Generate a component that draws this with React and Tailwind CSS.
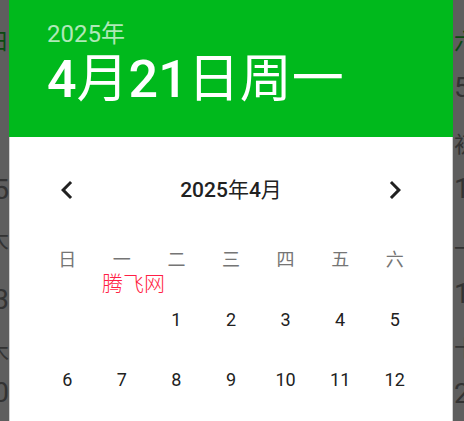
const FONT = "font-['Roboto','Noto_Sans_CJK_SC',sans-serif]";

function ChevronLeft() {
  return (
    <svg width="36" height="36" viewBox="0 0 24 24" fill="#212121">
      <path d="M15.41 7.41L14 6l-6 6 6 6 1.41-1.41L10.83 12z" />
    </svg>
  );
}

function ChevronRight() {
  return (
    <svg width="36" height="36" viewBox="0 0 24 24" fill="#212121">
      <path d="M10 6L8.59 7.41 13.17 12l-4.58 4.59L10 18l6-6z" />
    </svg>
  );
}

function LeftStrip() {
  return (
    <div className="w-[9px] shrink-0 overflow-hidden flex flex-col items-end text-[#333333]">
      <div className="h-[29px] shrink-0" />
      <div className="h-[26px] shrink-0 text-[22px] leading-[26px] text-[#0b4a12] whitespace-nowrap">日</div>
      <div className="h-[121px] shrink-0" />
      <div className="h-[28px] shrink-0 text-[28px] leading-[28px] whitespace-nowrap">5</div>
      <div className="h-[24px] shrink-0" />
      <div className="h-[24px] shrink-0 text-[22px] leading-[24px] whitespace-nowrap">大</div>
      <div className="h-[34px] shrink-0" />
      <div className="h-[28px] shrink-0 text-[28px] leading-[28px] whitespace-nowrap">3</div>
      <div className="h-[27px] shrink-0" />
      <div className="h-[24px] shrink-0 text-[22px] leading-[24px] whitespace-nowrap">木</div>
      <div className="h-[14px] shrink-0" />
      <div className="h-[28px] shrink-0 text-[28px] leading-[28px] whitespace-nowrap">0</div>
    </div>
  );
}

function RightStrip() {
  return (
    <div className="w-[11px] shrink-0 overflow-hidden flex flex-col items-start pl-[1px] text-[#333333]">
      <div className="h-[30px] shrink-0" />
      <div className="h-[24px] shrink-0 text-[22px] leading-[24px] text-[#0b4a12] whitespace-nowrap">六</div>
      <div className="h-[20px] shrink-0" />
      <div className="h-[28px] shrink-0 text-[28px] leading-[28px] whitespace-nowrap">5</div>
      <div className="h-[31px] shrink-0" />
      <div className="h-[24px] shrink-0 text-[22px] leading-[24px] whitespace-nowrap">初</div>
      <div className="h-[18px] shrink-0" />
      <div className="h-[28px] shrink-0 text-[28px] leading-[28px] whitespace-nowrap">1</div>
      <div className="h-[34px] shrink-0" />
      <div className="h-[24px] shrink-0 text-[22px] leading-[24px] whitespace-nowrap">一</div>
      <div className="h-[19px] shrink-0" />
      <div className="h-[28px] shrink-0 text-[28px] leading-[28px] whitespace-nowrap">1</div>
      <div className="h-[29px] shrink-0" />
      <div className="h-[24px] shrink-0 text-[22px] leading-[24px] whitespace-nowrap">十</div>
      <div className="h-[19px] shrink-0" />
      <div className="h-[28px] shrink-0 text-[28px] leading-[28px] whitespace-nowrap">2</div>
    </div>
  );
}

export default function App() {
  const weekdays = ["日", "一", "二", "三", "四", "五", "六"];
  const rows = [
    ["", "", "1", "2", "3", "4", "5"],
    ["6", "7", "8", "9", "10", "11", "12"],
  ];
  return (
    <div className={`w-[464px] h-[421px] overflow-hidden bg-[#5e5e5e] flex ${FONT}`}>
      <LeftStrip />
      <div className="w-[444px] shrink-0 flex flex-col">
        <header className="h-[137px] shrink-0 bg-[#00b91c] pl-[38px] pt-[18px]">
          <div className="text-[24px] leading-[32px] text-white/70">2025年</div>
          <div className="text-[52px] leading-[60px] text-white whitespace-nowrap">
            <span className="font-medium">4</span>
            <span>月</span>
            <span className="font-medium">21</span>
            <span>日周一</span>
          </div>
        </header>
        <div className="flex-1 bg-white px-[30px] pt-[35px] relative border-x border-[#d0d0d0]">
          <div className="grid grid-cols-7 h-[36px] items-center">
            <div className="flex justify-center">
              <ChevronLeft />
            </div>
            <div className="col-span-5 text-center text-[21px] leading-[36px] text-[#212121]">
              <span className="font-medium">2025</span>
              <span>年</span>
              <span className="font-medium">4</span>
              <span>月</span>
            </div>
            <div className="flex justify-center">
              <ChevronRight />
            </div>
          </div>
          <div className="mt-[21px] grid grid-cols-7 h-[60px] items-center text-center text-[18px] text-[#757575]">
            {weekdays.map((w) => (
              <div key={w}>{w}</div>
            ))}
          </div>
          {rows.map((r, i) => (
            <div key={i} className="grid grid-cols-7 h-[60px] items-center text-center text-[18px] text-[#212121]">
              {r.map((d, j) => (
                <div key={j}>{d}</div>
              ))}
            </div>
          ))}
          <div className="absolute left-[92px] top-[135px] text-[21px] leading-[24px] font-light text-[#ff1f45] whitespace-nowrap">
            腾飞网
          </div>
        </div>
      </div>
      <RightStrip />
    </div>
  );
}
